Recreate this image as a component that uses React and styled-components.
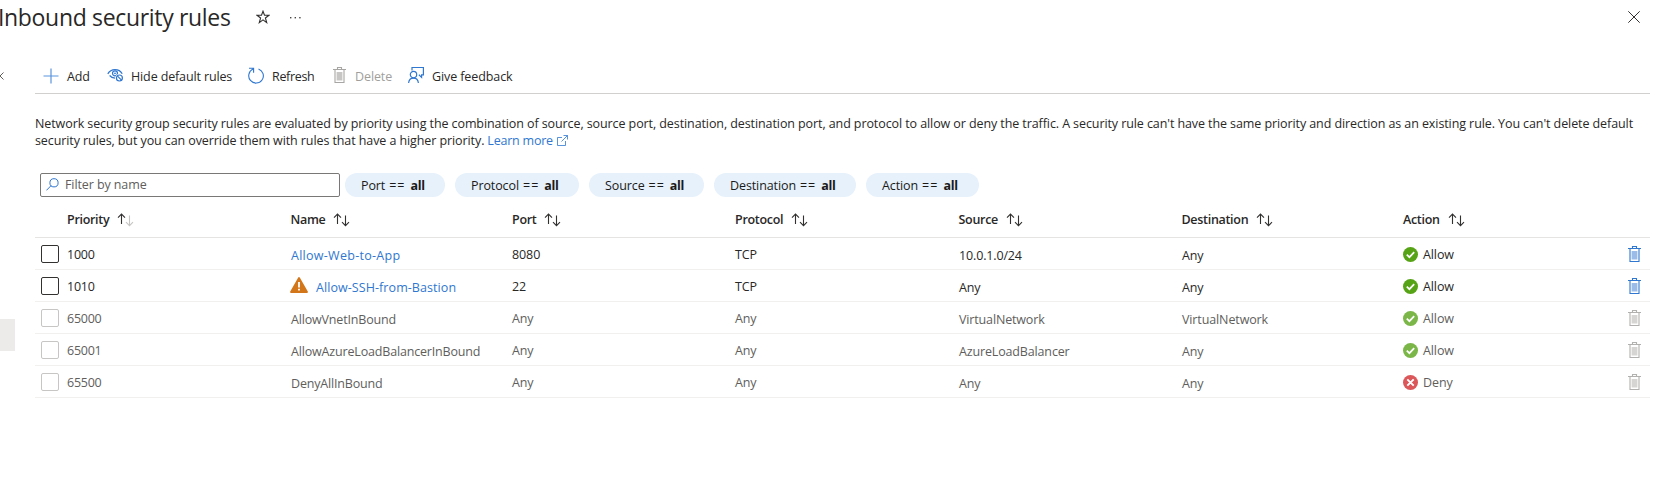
import React from 'react';
import styled, { createGlobalStyle, css } from 'styled-components';

const blue = '#2f77d0';

const GlobalStyle = createGlobalStyle`
  * { box-sizing: border-box; }
  body {
    margin: 0;
    overflow: hidden;
    background: #fff;
    color: #292827;
    font: 12.5px/17px "Open Sans", "Noto Sans", sans-serif;
    letter-spacing: -0.1px;
  }
`;

const Page = styled.div`
  height: 489px;
  display: flex;
  flex-direction: column;
  overflow: hidden;
`;

const TitleBar = styled.header`
  display: flex;
  align-items: center;
  height: 60px;
  padding: 0 13px 26px 0;
`;

const Title = styled.h1`
  margin: -1px 26px 0 -2px;
  width: 232px;
  font-size: 23px;
  font-weight: 400;
  line-height: 32px;
  letter-spacing: -0.33px;
  white-space: nowrap;
`;

const MoreIcon = styled.svg`
  margin-left: 19px;
`;

const CloseIcon = styled.svg`
  margin-left: auto;
`;

const Columns = styled.div`
  display: flex;
  flex: 1;
`;

const SideRail = styled.aside`
  width: 35px;
  padding-top: 12px;
  flex: none;
`;

const SideSelection = styled.div`
  width: 15px;
  height: 32px;
  margin-top: 239px;
  background: #edebe9;
`;

const CollapseIcon = styled.svg`
  display: block;
`;

const Content = styled.main`
  width: 1615px;
`;

const Toolbar = styled.div`
  display: flex;
  align-items: center;
  height: 34px;
  padding: 0 0 2px 8px;
  border-bottom: 1px solid #d2d0ce;
`;

const Command = styled.button`
  display: flex;
  align-items: center;
  flex: none;
  width: ${(p) => p.$width}px;
  padding: 0;
  border: 0;
  background: none;
  color: ${(p) => (p.$disabled ? '#a19f9d' : 'inherit')};
  font: inherit;
  letter-spacing: ${(p) => p.$tracking || -0.1}px;
  white-space: nowrap;

  svg {
    flex: none;
    margin-right: ${(p) => p.$gap || 6}px;
  }
`;

const CommandLabel = styled.span`
  padding-top: 2px;
`;

const Intro = styled.p`
  margin: 21px 0 24px;
  letter-spacing: -0.09px;
  white-space: nowrap;
`;

const LearnMore = styled.a`
  margin-left: 3px;
  color: ${blue};
  letter-spacing: -0.22px;

  svg {
    margin-left: 4px;
    vertical-align: -1px;
  }
`;

const Filters = styled.div`
  display: flex;
  align-items: center;
  height: 24px;
  padding-left: 5px;
`;

const SearchBox = styled.div`
  display: flex;
  align-items: center;
  width: 300px;
  height: 24px;
  margin-right: 5px;
  padding: 0 5px 1px;
  border: 1px solid #7a7876;
  border-radius: 2px;
  color: #605e5c;

  svg {
    margin-right: 6px;
  }
`;

const Pill = styled.button`
  display: flex;
  align-items: center;
  width: ${(p) => p.$width}px;
  height: 24px;
  margin-right: 10px;
  padding: 1px 0 0 16px;
  border: 0;
  border-radius: 12px;
  background: #e6f1fb;
  color: #1b1a19;
  font: inherit;
  letter-spacing: inherit;
  white-space: nowrap;

  b {
    letter-spacing: -0.3px;
  }
`;

const Operator = styled.span`
  margin: 0 5px 0 4px;
  letter-spacing: 1px;
`;

const Grid = styled.div`
  display: grid;
  grid-template-columns: 32px 223.5px 221.5px 223px 223.5px 223px 221.5px 1fr 22.5px;
`;

const HeaderRow = styled(Grid)`
  height: 41px;
  align-items: center;
  padding-top: 5px;
  border-bottom: 1px solid #e5e4e3;
  font-weight: 600;
  letter-spacing: -0.3px;
`;

const HeaderCell = styled.div`
  display: flex;
  align-items: center;

  svg {
    margin: 1px 0 0 8px;
  }
`;

const Row = styled(Grid)`
  height: 32px;
  align-items: center;
  border-bottom: 1px solid #f1f0ef;
  color: ${(p) => (p.$muted ? '#605e5c' : 'inherit')};
`;

const Checkbox = styled.span`
  width: 18px;
  height: 18px;
  margin-left: 6px;
  border: 1px solid ${(p) => (p.$muted ? '#c8c6c4' : '#323130')};
  border-radius: 2px;
`;

const Cell = styled.div`
  display: flex;
  align-items: center;
  padding-top: 1px;
  white-space: nowrap;
  letter-spacing: ${(p) => p.$tracking || -0.1}px;
  ${(p) =>
    p.$low &&
    css`
      padding: 3px 0 0 0.5px;
    `}
`;

const RuleLink = styled.a`
  color: ${blue};
  letter-spacing: ${(p) => (p.$wide ? 0.28 : 0.07)}px;
`;

const WarningIcon = styled.svg`
  margin: -4px 8px 0 -1px;
`;

const ActionCell = styled(Cell)`
  svg {
    margin-right: 5px;
    opacity: ${(p) => (p.$muted ? 0.78 : 1)};
  }
`;

const DeleteCell = styled.div`
  display: flex;
  padding-top: 2px;
`;

const Trash = ({ outline, fill }) => (
  <svg width="13" height="17" viewBox="0 0 13 17" fill="none">
    <path d="M4.5 2.5v-2h4v2M0 2.5h13M2 3v12.5h9V3" stroke={outline} strokeWidth="1.1" />
    <path d="M3.6 5h5.8v8.5H3.6z" fill={fill} />
  </svg>
);

const SortArrows = ({ ascending }) => (
  <svg width="17" height="14" viewBox="0 0 17 14" fill="none" strokeWidth="1.1">
    <path d="M4.5 11V1.2M1 4.6l3.5-3.5L8 4.6" stroke="#323130" />
    <path d="M12.5 2.5v10M9 9.2l3.5 3.5L16 9.2" stroke={ascending ? '#c8c6c4' : '#323130'} />
  </svg>
);

const StatusIcon = ({ denied }) => (
  <svg width="15" height="15" viewBox="0 0 15 15" fill="none">
    <circle cx="7.5" cy="7.5" r="7.5" fill={denied ? '#d1282d' : '#57a316'} />
    {denied ? (
      <path d="M4.3 4.3l6.4 6.4M10.7 4.3l-6.4 6.4" stroke="#fff" strokeWidth="1.9" />
    ) : (
      <path d="M3.8 7.7l2.6 2.5 4.8-5" stroke="#fff" strokeWidth="1.7" />
    )}
  </svg>
);

const pills = [
  ['Port', 100],
  ['Protocol', 124],
  ['Source', 115],
  ['Destination', 142],
  ['Action', 113],
];

const headers = ['Priority', 'Name', 'Port', 'Protocol', 'Source', 'Destination', 'Action'];

const rules = [
  { priority: '1000', name: 'Allow-Web-to-App', port: '8080', protocol: 'TCP', source: '10.0.1.0/24', destination: 'Any', action: 'Allow', custom: true },
  { priority: '1010', name: 'Allow-SSH-from-Bastion', port: '22', protocol: 'TCP', source: 'Any', destination: 'Any', action: 'Allow', custom: true, warning: true },
  { priority: '65000', name: 'AllowVnetInBound', port: 'Any', protocol: 'Any', source: 'VirtualNetwork', destination: 'VirtualNetwork', action: 'Allow' },
  { priority: '65001', name: 'AllowAzureLoadBalancerInBound', port: 'Any', protocol: 'Any', source: 'AzureLoadBalancer', destination: 'Any', action: 'Allow' },
  { priority: '65500', name: 'DenyAllInBound', port: 'Any', protocol: 'Any', source: 'Any', destination: 'Any', action: 'Deny' },
];

export default function App() {
  return (
    <Page>
      <GlobalStyle />
      <TitleBar>
        <Title>Inbound security rules</Title>
        <svg width="14" height="14" viewBox="0 0 14 14" fill="none" stroke="#323130" strokeWidth="1.1">
          <path d="M7 1.2l1.5 4.1h4.4L9.4 8l1.3 4.6L7 9.9l-3.7 2.7L4.6 8 1.1 5.3h4.4z" />
        </svg>
        <MoreIcon width="13" height="3" viewBox="0 0 13 3" fill="#484644">
          <rect x="1" y="1" width="1.4" height="1.4" />
          <rect x="5.6" y="1" width="1.4" height="1.4" />
          <rect x="10.2" y="1" width="1.4" height="1.4" />
        </MoreIcon>
        <CloseIcon width="12" height="12" viewBox="0 0 12 12" fill="none" stroke="#323130">
          <path d="M.3.3l11.4 11.4M11.7.3L.3 11.7" />
        </CloseIcon>
      </TitleBar>

      <Columns>
        <SideRail>
          <CollapseIcon width="4" height="8" viewBox="0 0 4 8" fill="none" stroke="#605e5c">
            <path d="M3.5.5L0 4l3.5 3.5" />
          </CollapseIcon>
          <SideSelection />
        </SideRail>

        <Content>
          <Toolbar>
            <Command $width={64} $gap={8}>
              <svg width="16" height="16" viewBox="0 0 16 16" stroke="#5b93dd" strokeWidth="1.2">
                <path d="M8 .5v15M.5 8h15" />
              </svg>
              <CommandLabel>Add</CommandLabel>
            </Command>
            <Command $width={141} $gap={7} $tracking={-0.13}>
              <svg width="17" height="15" viewBox="0 0 17 15" fill="none" stroke={blue} strokeWidth="1.2">
                <path d="M.8 5.9C2.4 3 5 1.6 8 1.6c3.1 0 5.700 1.4 7.2 4.1M2.6 7.500c1.4 1.7 3.1 2.5 5.4 2.6" />
                <circle cx="8" cy="5.3" r="2.5" />
                <circle cx="8" cy="5.3" r=".9" fill={blue} stroke="none" />
                <circle cx="12.4" cy="10" r="3.9" fill="#fff" stroke="none" />
                <circle cx="12.4" cy="10" r="3" />
                <path d="M10.3 7.9l4.2 4.2" />
              </svg>
              <CommandLabel>Hide default rules</CommandLabel>
            </Command>
            <Command $width={85} $gap={8} $tracking={-0.32}>
              <svg width="16" height="17" viewBox="0 0 16 17" fill="none" stroke={blue} strokeWidth="1.1">
                <path d="M10.5 1.9a7.3 7.3 0 1 1-5.4.2M1 1.3h4.6v4.4" />
              </svg>
              <CommandLabel>Refresh</CommandLabel>
            </Command>
            <Command $width={75} $gap={9} $disabled>
              <Trash outline="#a8a6a4" fill="#c8c6c4" />
              <CommandLabel>Delete</CommandLabel>
            </Command>
            <Command $width={110} $gap={8}>
              <svg width="16" height="17" viewBox="0 0 16 17" fill="none" stroke={blue} strokeWidth="1.2">
                <path d="M4 3.5v-3h11.4v7.3h-1.8v2.6l-2.7-2.6M.6 16c.3-3 2.1-4.8 4.9-4.8s4.6 1.8 4.9 4.8" />
                <circle cx="5.5" cy="7.6" r="3.2" />
              </svg>
              <CommandLabel>Give feedback</CommandLabel>
            </Command>
          </Toolbar>

          <Intro>
            Network security group security rules are evaluated by priority using the combination of source, source
            port, destination, destination port, and protocol to allow or deny the traffic. A security rule can't have
            the same priority and direction as an existing rule. You can't delete default
            <br />
            security rules, but you can override them with rules that have a higher priority.
            <LearnMore>
              Learn more
              <svg width="11" height="11" viewBox="0 0 11 11" fill="none" stroke={blue} strokeWidth=".8">
                <path d="M5 2.5H.5v8h8V6M6.5.5h4v4M10.5.5l-6 6" />
              </svg>
            </LearnMore>
          </Intro>

          <Filters>
            <SearchBox>
              <svg width="13" height="13" viewBox="0 0 13 13" fill="none" stroke={blue} strokeWidth="1">
                <circle cx="8" cy="4.8" r="4.1" />
                <path d="M5 7.7L.4 12.4" />
              </svg>
              Filter by name
            </SearchBox>
            {pills.map(([label, width]) => (
              <Pill key={label} $width={width}>
                {label}
                <Operator>==</Operator>
                <b>all</b>
              </Pill>
            ))}
          </Filters>

          <HeaderRow>
            <span />
            {headers.map((label) => (
              <HeaderCell key={label}>
                {label}
                <SortArrows ascending={label === 'Priority'} />
              </HeaderCell>
            ))}
          </HeaderRow>
          {rules.map((rule) => (
            <Row key={rule.priority} $muted={!rule.custom}>
              <Checkbox $muted={!rule.custom} />
              <Cell $tracking={-0.25}>{rule.priority}</Cell>
              <Cell $low $tracking={-0.17}>
                {rule.warning && (
                  <WarningIcon width="18" height="16" viewBox="0 0 18 16">
                    <path d="M9 1l8 14H1z" fill="#d3761a" stroke="#d3761a" strokeWidth="1.8" strokeLinejoin="round" />
                    <path d="M8.1 5h1.8v5.5H8.1zM8.1 11.7h1.8v1.8H8.1z" fill="#fff" />
                  </WarningIcon>
                )}
                {rule.custom ? <RuleLink $wide={!rule.warning}>{rule.name}</RuleLink> : rule.name}
              </Cell>
              <Cell>{rule.port}</Cell>
              <Cell>{rule.protocol}</Cell>
              <Cell $low $tracking={-0.15}>{rule.source}</Cell>
              <Cell $low $tracking={-0.12}>{rule.destination}</Cell>
              <ActionCell $muted={!rule.custom}>
                <StatusIcon denied={rule.action === 'Deny'} />
                {rule.action}
              </ActionCell>
              <DeleteCell>
                <Trash
                  outline={rule.custom ? '#2f77d0' : '#b3b1af'}
                  fill={rule.custom ? '#9bbbe8' : '#d6d5d3'}
                />
              </DeleteCell>
            </Row>
          ))}
        </Content>
      </Columns>
    </Page>
  );
}
